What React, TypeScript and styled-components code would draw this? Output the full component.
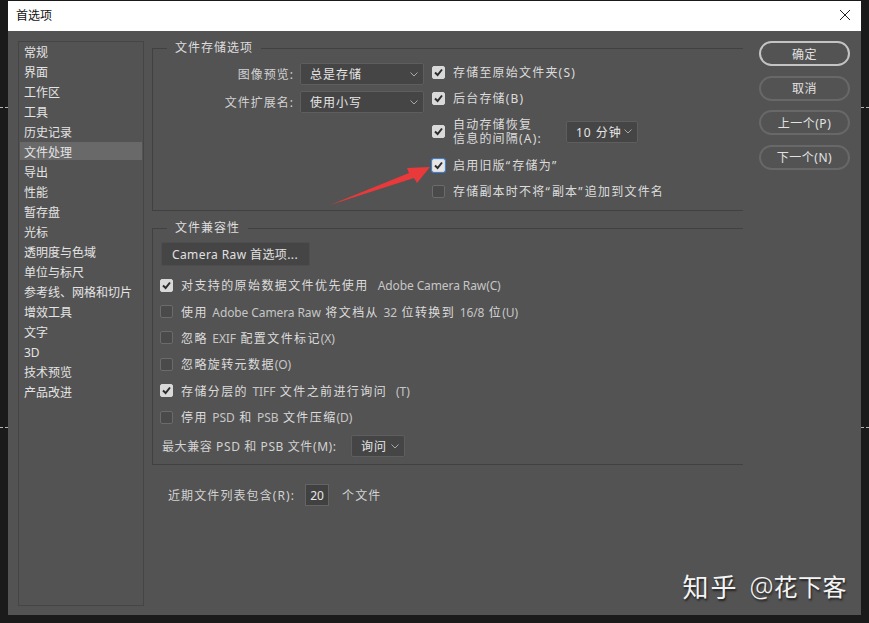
import React from 'react';
import styled, { createGlobalStyle } from 'styled-components';

const GlobalStyle = createGlobalStyle`
  html, body {
    margin: 0;
    padding: 0;
    background: #1a1a1a;
  }
  * {
    box-sizing: border-box;
  }
`;

const FONT = `"Noto Sans", "Noto Sans CJK SC", sans-serif`;

const Page = styled.div`
  position: relative;
  width: 869px;
  height: 623px;
  padding: 1px 8px 8px;
  overflow: hidden;
  background: #1a1a1a;
  font-family: ${FONT};
  font-size: 12px;
  color: #dcdcdc;
`;

const GuideTick = styled.i<{ $side: 'left' | 'right'; $top: number }>`
  position: absolute;
  top: ${(p) => p.$top}px;
  ${(p) => p.$side}: 0;
  width: 8px;
  border-top: 1px dashed #b5b5b5;
`;

const Dialog = styled.div`
  position: relative;
  display: flex;
  flex-direction: column;
  width: 853px;
  height: 614px;
  background: #535353;
`;

const TitleBar = styled.div`
  display: flex;
  align-items: center;
  justify-content: space-between;
  flex: none;
  height: 30px;
  padding: 0 10px 2px 8px;
  background: #fff;
  color: #111;
  font-size: 12px;
`;

const CloseIcon = styled.svg`
  display: block;
  width: 12px;
  height: 12px;
  stroke: #222;
  stroke-width: 1;
  fill: none;
`;

const Body = styled.div`
  display: flex;
  flex: 1;
  min-height: 0;
  padding: 10px 11px 9px 10px;
`;

const Sidebar = styled.ul`
  flex: none;
  width: 126px;
  margin: 0 8px 0 0;
  padding: 0 1px;
  list-style: none;
  border: 1px solid #454545;
`;

const SidebarItem = styled.li<{ $active?: boolean }>`
  display: flex;
  align-items: center;
  height: 18px;
  margin-bottom: 2px;
  padding: 4px 0 0 4px;
  background: ${(p) => (p.$active ? '#696969' : 'transparent')};
  color: #e4e4e4;
  font-size: 12px;
  line-height: 18px;
`;

const Main = styled.div`
  display: flex;
  flex-direction: column;
  flex: none;
  width: 591px;
  margin-top: -1px;
`;

const Group = styled.fieldset<{ $spaced?: boolean }>`
  flex: none;
  margin: ${(p) => (p.$spaced ? '9px 0 0' : '0')};
  padding: 0;
  min-width: 0;
  border: 1px solid #414141;
  border-right: none;
`;

const Legend = styled.legend`
  margin-left: 14px;
  padding: 0 8px;
  height: 16px;
  line-height: 16px;
  font-size: 12px;
  letter-spacing: 1px;
  color: #dedede;
`;

const SaveOptions = styled.div`
  display: flex;
  height: 154px;
  padding-top: 3px;
`;

const FormatColumn = styled.div`
  display: grid;
  grid-template-columns: 141px 124px;
  grid-auto-rows: 22px;
  column-gap: 6px;
  row-gap: 6px;
  align-content: start;
  flex: none;
  margin: 4px 8px 0 0;
`;

const FieldLabel = styled.span`
  align-self: center;
  text-align: right;
  letter-spacing: 1px;
  color: #d2d2d2;
`;

const CheckColumn = styled.div`
  display: flex;
  flex-direction: column;
  flex: 1;
`;

const CheckRow = styled.label<{ $height?: number }>`
  display: flex;
  align-items: center;
  flex: none;
  height: ${(p) => p.$height ?? 26}px;
  letter-spacing: 1.2px;
  color: #dcdcdc;
  white-space: nowrap;
`;

const RowText = styled.span`
  display: block;
  white-space: pre;
`;

const Latin = styled.span`
  letter-spacing: -0.1px;
  color: #c6c6c6;
`;

const Quote = styled.span`
  letter-spacing: 2.2px;
`;

const Box = styled.span<{ $checked?: boolean; $focused?: boolean }>`
  display: flex;
  align-items: center;
  justify-content: center;
  flex: none;
  width: 13px;
  height: 13px;
  margin-right: 8px;
  border-radius: 2px;
  background: ${(p) => (p.$checked ? '#d9d9d9' : '#4a4a4a')};
  border: 1px solid ${(p) => (p.$checked ? '#d9d9d9' : '#6b6b6b')};
  ${(p) => p.$focused && 'box-shadow: 0 0 0 1px #3f7fd0; background: #e6e6e6;'}
`;

const CheckMark = styled.svg`
  display: block;
  width: 9px;
  height: 9px;
  fill: none;
  stroke: #2b2b2b;
  stroke-width: 2;
`;

const TwoLines = styled.span`
  display: block;
  width: 113px;
  line-height: 14px;
`;

const Select = styled.div<{ $width?: number }>`
  display: flex;
  align-items: center;
  justify-content: space-between;
  flex: none;
  width: ${(p) => (p.$width ? `${p.$width}px` : '100%')};
  height: 22px;
  padding: 0 5px 0 9px;
  background: #454545;
  border: 1px solid #5e5e5e;
  border-radius: 2px;
  letter-spacing: 1px;
  color: #e6e6e6;
`;

const Chevron = styled.svg`
  display: block;
  flex: none;
  width: 8px;
  height: 5px;
  fill: none;
  stroke: #a8a8a8;
  stroke-width: 1;
`;

const CompatBody = styled.div`
  padding: 6px 0 7px 8px;
`;

const RawButton = styled.div`
  display: flex;
  align-items: center;
  width: 149px;
  height: 24px;
  margin-bottom: 6px;
  padding-left: 10px;
  background: #454545;
  border: 1px solid #4e4e4e;
  border-radius: 2px;
  letter-spacing: 0.4px;
  color: #e0e0e0;
`;

const CompatRow = styled(CheckRow)`
  height: 26.4px;
  margin-left: -1px;
  letter-spacing: 1.4px;
`;

const MaxRow = styled.div`
  display: flex;
  align-items: center;
  margin-top: 5px;
  padding-left: 1px;
  letter-spacing: 0.6px;
  color: #d2d2d2;
`;

const MaxLabel = styled.span`
  width: 189px;
  flex: none;
`;

const RecentRow = styled.div`
  display: flex;
  align-items: center;
  margin-top: 19px;
  padding-left: 16px;
  letter-spacing: 1.1px;
  color: #d2d2d2;
`;

const RecentInput = styled.span`
  display: flex;
  align-items: center;
  justify-content: center;
  flex: none;
  width: 24px;
  height: 22px;
  margin: 0 13px 0 10px;
  background: #414141;
  border: 1px solid #646464;
  color: #e6e6e6;
  letter-spacing: 0;
`;

const Actions = styled.div`
  display: flex;
  flex-direction: column;
  gap: 9.5px;
  flex: none;
  width: 91px;
  margin-left: 16px;
`;

const ActionButton = styled.div<{ $primary?: boolean }>`
  display: flex;
  align-items: center;
  justify-content: center;
  height: 25px;
  border: 2px solid ${(p) => (p.$primary ? '#c4c4c4' : '#686868')};
  border-radius: 13px;
  letter-spacing: 0.5px;
  color: #e2e2e2;
`;

const Arrow = styled.svg`
  position: absolute;
  left: 318px;
  top: 155px;
  width: 120px;
  height: 60px;
  fill: #e9393b;
`;

const Watermark = styled.div`
  position: absolute;
  right: 14px;
  bottom: 12px;
  display: flex;
  align-items: center;
  font-size: 24px;
  line-height: 32px;
  letter-spacing: 0.5px;
  color: #f4f4f4;
  text-shadow: 1px 2px 2px #222;
  white-space: nowrap;
`;

const WatermarkBrand = styled.span`
  margin-right: 11px;
  font-size: 26px;
  letter-spacing: 2px;
`;

const WatermarkAt = styled.span`
  font-size: 27px;
  font-weight: 300;
  letter-spacing: 0;
`;

const NAV_ITEMS = [
  '常规', '界面', '工作区', '工具', '历史记录', '文件处理', '导出', '性能', '暂存盘', '光标',
  '透明度与色域', '单位与标尺', '参考线、网格和切片', '增效工具', '文字', '3D', '技术预览', '产品改进',
];

const COMPAT_OPTIONS = [
  { text: '对支持的原始数据文件优先使用  Adobe Camera Raw(C)', checked: true },
  { text: '使用 Adobe Camera Raw 将文档从 32 位转换到 16/8 位(U)', checked: false },
  { text: '忽略 EXIF 配置文件标记(X)', checked: false },
  { text: '忽略旋转元数据(O)', checked: false },
  { text: '存储分层的 TIFF 文件之前进行询问  (T)', checked: true },
  { text: '停用 PSD 和 PSB 文件压缩(D)', checked: false },
];

// latin runs sit tighter and dimmer than the CJK text around them
const MixedText = ({ text }: { text: string }) => (
  <RowText>
    {text.split(/([A-Za-z0-9()/]+(?: [A-Za-z]+)*(?:\([A-Z]\))?)/).map((part, i) =>
      i % 2 === 1 ? <Latin key={i}>{part}</Latin> : part,
    )}
  </RowText>
);

const ChevronDown = () => (
  <Chevron viewBox="0 0 8 5">
    <path d="M0.5 0.5 L4 4 L7.5 0.5" />
  </Chevron>
);

const CheckBox = ({ checked, focused }: { checked?: boolean; focused?: boolean }) => (
  <Box $checked={checked} $focused={focused}>
    {checked && (
      <CheckMark viewBox="0 0 9 9">
        <path d="M1 4.5 L3.6 7 L8 1.5" />
      </CheckMark>
    )}
  </Box>
);

const App: React.FC = () => (
  <Page>
    <GlobalStyle />
    <GuideTick $side="left" $top={107} />
    <GuideTick $side="right" $top={107} />
    <GuideTick $side="left" $top={427} />
    <GuideTick $side="right" $top={427} />
    <Dialog>
      <TitleBar>
        <span>首选项</span>
        <CloseIcon viewBox="0 0 12 12">
          <path d="M1 1 L11 11 M11 1 L1 11" />
        </CloseIcon>
      </TitleBar>
      <Body>
        <Sidebar>
          {NAV_ITEMS.map((item) => (
            <SidebarItem key={item} $active={item === '文件处理'}>
              {item}
            </SidebarItem>
          ))}
        </Sidebar>
        <Main>
          <Group>
            <Legend>文件存储选项</Legend>
            <SaveOptions>
              <FormatColumn>
                <FieldLabel>图像预览:</FieldLabel>
                <Select>
                  总是存储
                  <ChevronDown />
                </Select>
                <FieldLabel>文件扩展名:</FieldLabel>
                <Select>
                  使用小写
                  <ChevronDown />
                </Select>
              </FormatColumn>
              <CheckColumn>
                <CheckRow>
                  <CheckBox checked />
                  存储至原始文件夹(S)
                </CheckRow>
                <CheckRow>
                  <CheckBox checked />
                  后台存储(B)
                </CheckRow>
                <CheckRow $height={41}>
                  <CheckBox checked />
                  <TwoLines>
                    自动存储恢复
                    <br />
                    信息的间隔(A):
                  </TwoLines>
                  <Select $width={72}>
                    10 分钟
                    <ChevronDown />
                  </Select>
                </CheckRow>
                <CheckRow>
                  <CheckBox checked focused />
                  <RowText>
                    启用旧版<Quote>“</Quote>存储为<Quote>”</Quote>
                  </RowText>
                </CheckRow>
                <CheckRow>
                  <CheckBox />
                  <RowText>
                    存储副本时不将<Quote>“</Quote>副本<Quote>”</Quote>追加到文件名
                  </RowText>
                </CheckRow>
              </CheckColumn>
            </SaveOptions>
          </Group>
          <Group $spaced>
            <Legend>文件兼容性</Legend>
            <CompatBody>
              <RawButton>Camera Raw 首选项...</RawButton>
              {COMPAT_OPTIONS.map((option) => (
                <CompatRow key={option.text}>
                  <CheckBox checked={option.checked} />
                  <MixedText text={option.text} />
                </CompatRow>
              ))}
              <MaxRow>
                <MaxLabel>最大兼容 PSD 和 PSB 文件(M):</MaxLabel>
                <Select $width={54}>
                  询问
                  <ChevronDown />
                </Select>
              </MaxRow>
            </CompatBody>
          </Group>
          <RecentRow>
            近期文件列表包含(R):
            <RecentInput>20</RecentInput>
            个文件
          </RecentRow>
        </Main>
        <Actions>
          <ActionButton $primary>确定</ActionButton>
          <ActionButton>取消</ActionButton>
          <ActionButton>上一个(P)</ActionButton>
          <ActionButton>下一个(N)</ActionButton>
        </Actions>
      </Body>
      <Arrow viewBox="0 0 120 60">
        <path d="M4 49 L83 17 L81 12 L104 11 L91 27 L88 22 Z" />
      </Arrow>
      <Watermark>
        <WatermarkBrand>知乎</WatermarkBrand>
        <WatermarkAt>@</WatermarkAt>
        花下客
      </Watermark>
    </Dialog>
  </Page>
);

export default App;
